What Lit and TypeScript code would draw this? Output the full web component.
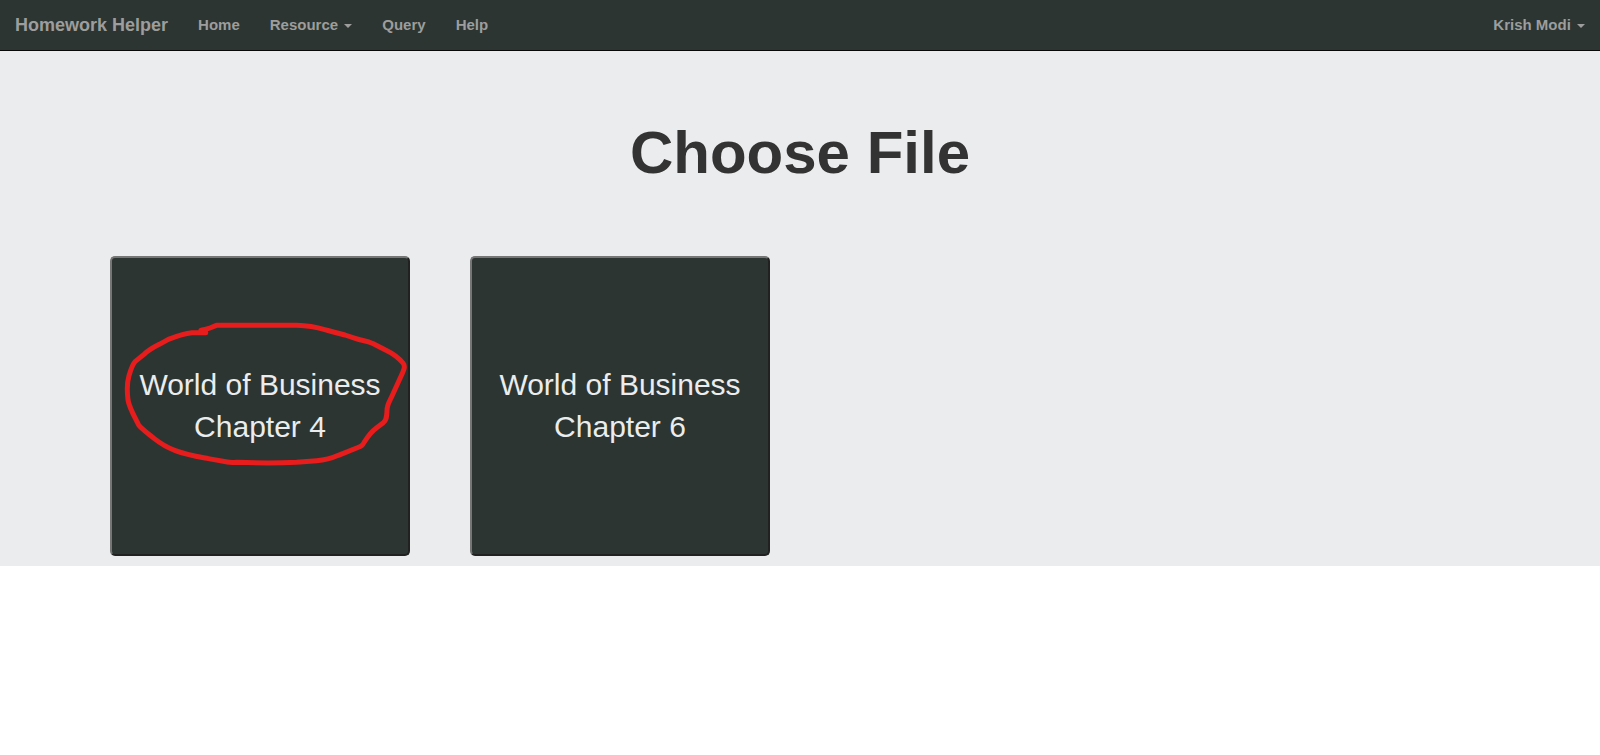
import { LitElement, html, css, nothing } from "lit";
import { customElement, property } from "lit/decorators.js";

interface Chapter {
  book: string;
  chapter: number;
  marked: boolean;
}

@customElement("nav-bar")
class NavBar extends LitElement {
  @property() user = "";

  static styles = css`
    :host {
      display: block;
    }
    .bar {
      display: flex;
      align-items: center;
      min-height: 50px;
      background: #2c3531;
      border-bottom: 1px solid #080808;
      font-weight: bold;
      font-size: 15px;
      line-height: 20px;
    }
    .brand,
    .item {
      padding: 15px;
      color: #9d9d9d;
      text-decoration: none;
      white-space: nowrap;
    }
    .brand {
      font-size: 18px;
    }
    .item:hover {
      color: #fff;
    }
    .items {
      display: flex;
      flex: 1;
      margin: 0;
      padding: 0;
      list-style: none;
    }
    .entry {
      display: flex;
    }
    .last {
      margin-left: auto;
    }
    .menu {
      border: 0;
      background: none;
      font: inherit;
      cursor: pointer;
    }
    .caret {
      display: inline-block;
      margin-left: 2px;
      vertical-align: middle;
      border-top: 4px solid currentColor;
      border-right: 4px solid transparent;
      border-left: 4px solid transparent;
    }
  `;

  render() {
    return html`
      <nav class="bar">
        <a class="brand" href="#">Homework Helper</a>
        <ul class="items">
          <li class="entry"><a class="item" href="#home">Home</a></li>
          <li class="entry">
            <button class="item menu" aria-haspopup="true">Resource <span class="caret"></span></button>
          </li>
          <li class="entry"><a class="item" href="#query">Query</a></li>
          <li class="entry"><a class="item" href="#help">Help</a></li>
          <li class="entry last">
            <button class="item menu" aria-haspopup="true">${this.user} <span class="caret"></span></button>
          </li>
        </ul>
      </nav>
    `;
  }
}

@customElement("file-tile")
class FileTile extends LitElement {
  @property({ attribute: false }) file!: Chapter;

  static styles = css`
    :host {
      display: block;
      position: relative;
      width: 300px;
      height: 300px;
    }
    .tile {
      box-sizing: border-box;
      width: 100%;
      height: 100%;
      padding: 0 16px;
      border: 2px solid;
      border-color: #767676 #212121 #212121 #767676;
      border-radius: 5px;
      background: #2c3531;
      color: #ebecee;
      font: inherit;
      font-size: 30px;
      line-height: 42px;
      cursor: pointer;
    }
    .mark {
      position: absolute;
      inset: 0;
      width: 100%;
      height: 100%;
      pointer-events: none;
    }
  `;

  render() {
    return html`
      <button class="tile">${this.file.book} Chapter ${this.file.chapter}</button>
      ${this.file.marked
        ? html`<svg class="mark" viewBox="30 33 900 900" fill="none" stroke="#e71c1c" stroke-width="15" stroke-linecap="round" stroke-linejoin="round" aria-hidden="true">
            <path d="M317 263H276C255 265 220 277 205 283L178 298C158 308 145 316 132 328L105 350C97 358 91 378 87 392C81 412 81 440 84 465C88 490 110 527 116 540C126 553 150 570 163 581C183 597 205 609 226 617C260 630 298 636 325 641L382 651C390 653 400 652 410 652C470 654 540 654 590 652L650 647C680 645 695 640 715 631L770 609C783 604 787 603 793 591C804 573 815 559 830 548L850 533C861 524 860 512 861 496C861 478 870 467 876 453L903 394C912 374 917 364 909 354C896 338 872 322 855 314L817 295C802 287 785 287 768 281L735 270C710 263 695 260 674 254C650 247 620 242 590 241H349L330 249C320 253 310 253 303 256L317 263" />
          </svg>`
        : nothing}
    `;
  }
}

@customElement("app-root")
class AppRoot extends LitElement {
  private files: Chapter[] = [
    { book: "World of Business", chapter: 4, marked: true },
    { book: "World of Business", chapter: 6, marked: false },
  ];

  static styles = css`
    :host {
      display: block;
      font-family: "Liberation Sans", Arial, sans-serif;
    }
    .page {
      padding: 68px 5% 10px;
      background: #ebecee;
    }
    .title {
      margin: 0 0 70px;
      color: #333;
      font-size: 60px;
      line-height: 67px;
      text-align: center;
    }
    .files {
      display: flex;
      flex-wrap: wrap;
      gap: 60px;
      padding: 0 30px;
    }
  `;

  render() {
    return html`
      <nav-bar user="Krish Modi"></nav-bar>
      <main class="page">
        <h1 class="title">Choose File</h1>
        <div class="files">
          ${this.files.map((file) => html`<file-tile .file=${file}></file-tile>`)}
        </div>
      </main>
    `;
  }
}
